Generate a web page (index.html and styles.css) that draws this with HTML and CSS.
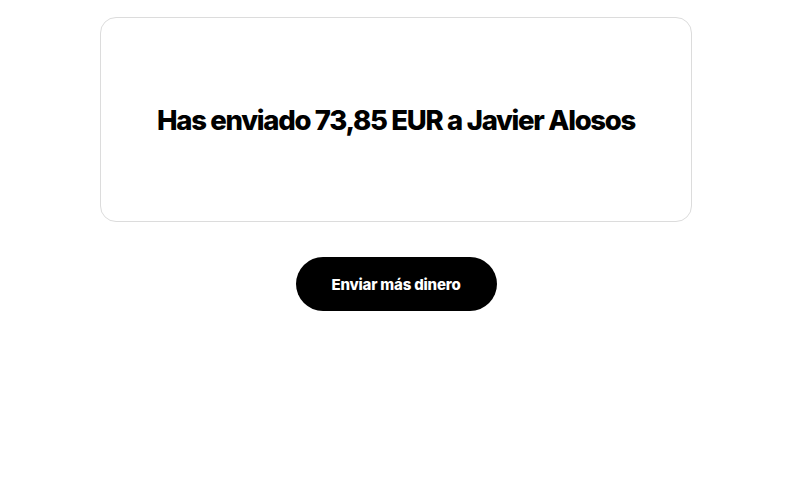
FILE: index.html
```html
<!DOCTYPE html>
<html lang="es">
<head>
    <meta charset="UTF-8">
    <meta name="viewport" content="width=device-width, initial-scale=1.0">
    <title>Envío completado</title>
    <link rel="stylesheet" href="styles.css">
</head>
<body>
    <div class="page">
        <div class="result-card">
            <h1 class="result-title">Has enviado 73,85 EUR a Javier Alosos</h1>
        </div>
        <button class="send-again">Enviar más dinero</button>
    </div>
</body>
</html>
```

FILE: styles.css
```css
body {
    margin: 0;
    padding: 17px 8px 0 0;
    background-color: #ffffff;
    font-family: "Inter", "Lato", sans-serif;
    color: #000000;
}

.page {
    display: flex;
    flex-direction: column;
    align-items: center;
}

.result-card {
    width: 592px;
    height: 205px;
    box-sizing: border-box;
    border: 1px solid #dcdcdc;
    border-radius: 16px; /* soft corners */
    display: flex;
    align-items: center;
    justify-content: center;
}

.result-title {
    margin: 0;
    font-size: 27.5px;
    font-weight: 800;
    letter-spacing: -1.3px;
    line-height: 1;
    padding-top: 2px;
    text-align: center;
}

.send-again {
    margin-top: 35px;
    width: 201px;
    height: 54px;
    border: none;
    border-radius: 27px;
    background-color: #000000;
    color: #ffffff;
    font-family: inherit;
    font-size: 15px;
    font-weight: 800;
    letter-spacing: -0.2px;
    cursor: pointer;
}
```
